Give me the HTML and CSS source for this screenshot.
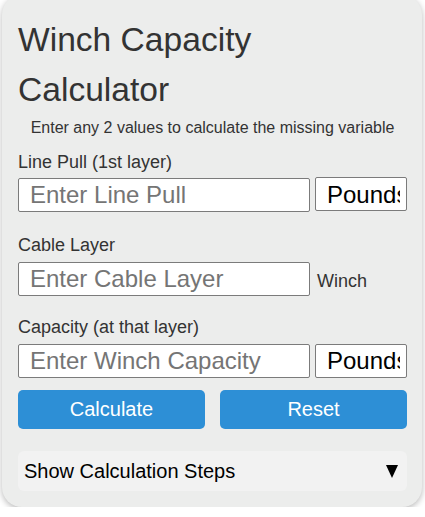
FILE: index.html
```html
<!DOCTYPE html>
<html lang="en">
<head>
<meta charset="utf-8">
<title>Winch Capacity Calculator</title>
<link rel="stylesheet" href="styles.css">
</head>
<body>
<div class="card">
  <h1 class="title">Winch Capacity Calculator</h1>
  <p class="subtitle">Enter any 2 values to calculate the missing variable</p>

  <div class="group group-first">
    <label class="label" for="pull">Line Pull (1st layer)</label>
    <div class="row">
      <input class="field" id="pull" type="text" placeholder="Enter Line Pull">
      <select class="unit"><option>Pounds</option></select>
    </div>
  </div>

  <div class="group">
    <label class="label" for="layer">Cable Layer</label>
    <div class="row">
      <input class="field" id="layer" type="text" placeholder="Enter Cable Layer">
      <span class="unit-text">Winch</span>
    </div>
  </div>

  <div class="group">
    <label class="label" for="cap">Capacity (at that layer)</label>
    <div class="row">
      <input class="field" id="cap" type="text" placeholder="Enter Winch Capacity">
      <select class="unit"><option>Pounds</option></select>
    </div>
  </div>

  <div class="buttons">
    <button class="btn" type="button">Calculate</button>
    <button class="btn" type="button">Reset</button>
  </div>

  <div class="steps">
    <span>Show Calculation Steps</span>
    <svg class="arrow" width="12" height="13" viewBox="0 0 12 13"><polygon points="0,0 12,0 6,13" fill="#000"/></svg>
  </div>
</div>
</body>
</html>
```

FILE: styles.css
```css
html, body {
  margin: 0;
  padding: 0;
  background: #ffffff;
}

body {
  font-family: "Liberation Sans", Arial, sans-serif;
  color: #333333;
}

.card {
  margin: -5px 0 0 2px;
  padding: 20px 15px 16px 16px;
  box-sizing: content-box;
  width: 389px;
  background: #ecedec;
  border-radius: 20px;
  box-shadow: 0 2px 6px rgba(0, 0, 0, 0.28);
}

.title {
  margin: 0;
  font-size: 33.6px;
  line-height: 50px;
  font-weight: normal;
  color: #333333;
  width: 300px;
}

.subtitle {
  margin: 4px 0 0;
  font-size: 16px;
  line-height: 18px;
  text-align: center;
  color: #333333;
}

.group {
  display: flex;
  flex-direction: column;
}

.group + .group {
  margin-top: 21px;
}

.subtitle + .group {
  margin-top: 15px;
}

.group-first + .group {
  margin-top: 23px;
}

.label {
  font-size: 18px;
  line-height: 21px;
  margin-bottom: 6px;
}

.group-first .label {
  margin-bottom: 4px;
}

.row {
  display: flex;
  align-items: baseline;
  gap: 5px;
}

.field {
  width: 292px;
  height: 34px;
  box-sizing: border-box;
  margin: 0;
  padding: 0 11px;
  border: 1px solid #7b7b7b;
  border-radius: 2px;
  background: #ffffff;
  font-family: "Liberation Sans", Arial, sans-serif;
  font-size: 24px;
  color: #333333;
}

.field::placeholder {
  color: #757575;
}

.unit {
  width: 92px;
  height: 34px;
  box-sizing: border-box;
  margin: 0;
  padding: 0 6px 0 11px;
  border: 1px solid #7b7b7b;
  border-radius: 2px;
  background: #ffffff;
  font-family: "Liberation Sans", Arial, sans-serif;
  font-size: 24px;
  color: #000000;
  -webkit-appearance: none;
  appearance: none;
  overflow: hidden;
}

.unit-text {
  font-size: 18px;
  color: #333333;
  margin-left: 2px;
}

.buttons {
  display: flex;
  gap: 15px;
  margin-top: 12px;
}

.btn {
  flex: 1;
  height: 39px;
  margin: 0;
  border: none;
  border-radius: 5px;
  background: #2d8fd6;
  color: #ffffff;
  font-family: "Liberation Sans", Arial, sans-serif;
  font-size: 20px;
  padding: 0;
}

.steps {
  margin-top: 22px;
  height: 40px;
  box-sizing: border-box;
  display: flex;
  align-items: center;
  justify-content: space-between;
  padding: 0 9px 0 6px;
  background: #f2f2f2;
  border-radius: 6px;
  font-size: 20px;
  color: #000000;
}

.arrow {
  display: block;
}
```
